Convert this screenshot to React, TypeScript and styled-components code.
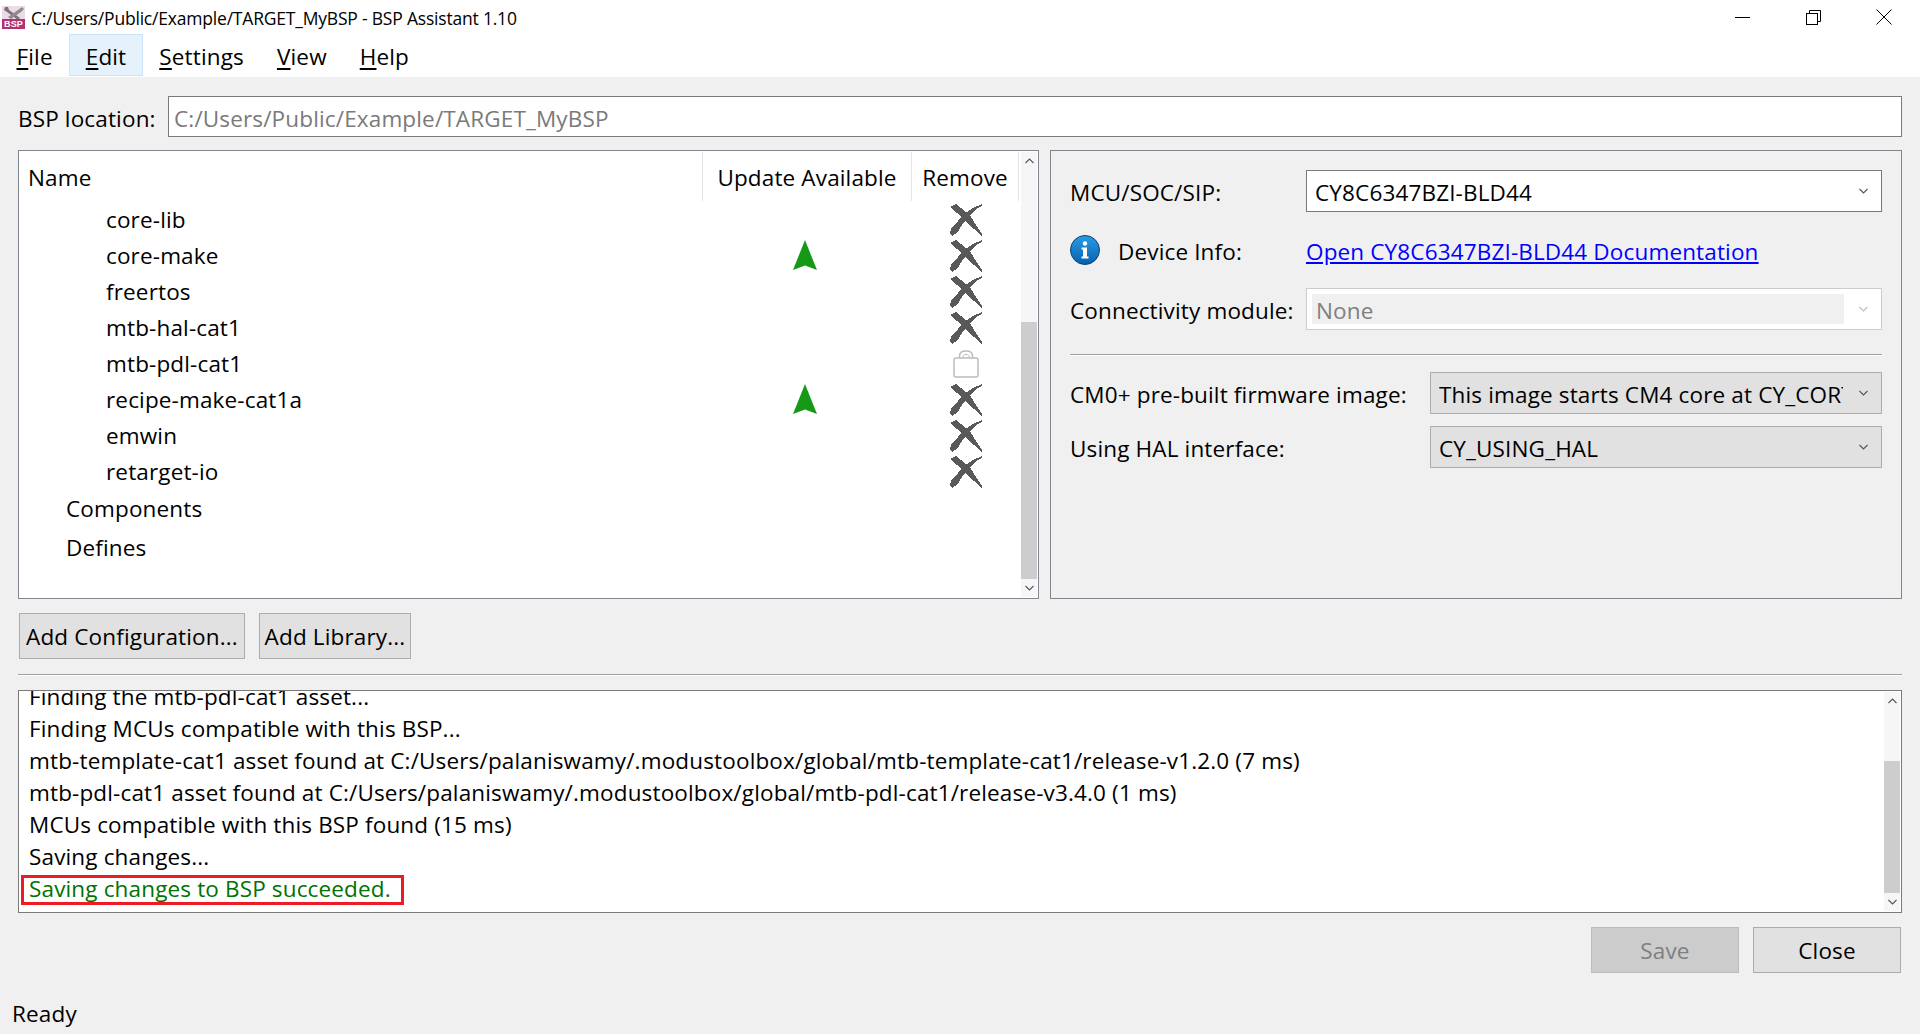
import React from 'react';
import styled, { createGlobalStyle } from 'styled-components';

const GlobalStyle = createGlobalStyle`
  html, body {
    margin: 0;
    padding: 0;
    background: #f0f0f0;
  }
  * {
    box-sizing: border-box;
  }
`;

const libraries = [
  { name: 'core-lib', update: false, locked: false },
  { name: 'core-make', update: true, locked: false },
  { name: 'freertos', update: false, locked: false },
  { name: 'mtb-hal-cat1', update: false, locked: false },
  { name: 'mtb-pdl-cat1', update: false, locked: true },
  { name: 'recipe-make-cat1a', update: true, locked: false },
  { name: 'emwin', update: false, locked: false },
  { name: 'retarget-io', update: false, locked: false },
];

const logLines = [
  'Finding the mtb-pdl-cat1 asset...',
  'Finding MCUs compatible with this BSP...',
  'mtb-template-cat1 asset found at C:/Users/palaniswamy/.modustoolbox/global/mtb-template-cat1/release-v1.2.0 (7 ms)',
  'mtb-pdl-cat1 asset found at C:/Users/palaniswamy/.modustoolbox/global/mtb-pdl-cat1/release-v3.4.0 (1 ms)',
  'MCUs compatible with this BSP found (15 ms)',
  'Saving changes...',
];

const AppIcon = () => (
  <svg width="23" height="23" viewBox="0 0 23 23">
    <rect width="23" height="23" fill="#ecdbe4" />
    <path d="M3 1 L6 1 L7 4 L18 12 L16 14 L5 6 L2 4Z" fill="#77737a" />
    <path d="M20 1 L22 3 L19 6 L9 13 L6 11 L16 4Z" fill="#8f8b91" />
    <rect y="13" width="23" height="10" fill="#b0336f" />
    <text x="11.5" y="21.4" textAnchor="middle" fontSize="9" fontWeight="700" fontFamily="Liberation Sans, sans-serif" fill="#fff">
      BSP
    </text>
  </svg>
);

const MinimizeIcon = () => (
  <svg width="15" height="15" viewBox="0 0 15 15">
    <path d="M0 7.5H15" stroke="#000" strokeWidth="1" />
  </svg>
);

const RestoreIcon = () => (
  <svg width="15" height="15" viewBox="0 0 15 15" fill="none" stroke="#000" strokeWidth="1">
    <rect x="0.5" y="3.5" width="11" height="11" />
    <path d="M3.5 3.5V0.5H14.5V11.5H11.5" />
  </svg>
);

const CloseIcon = () => (
  <svg width="16" height="16" viewBox="0 0 16 16" fill="none" stroke="#000" strokeWidth="1">
    <path d="M0.5 0.5L15.5 15.5M15.5 0.5L0.5 15.5" />
  </svg>
);

const RemoveIcon = () => (
  <svg width="32" height="32" viewBox="0 0 32 32" fill="#595959" shapeRendering="crispEdges">
    <path d="M0 3 L6 0 L16 8 L21 13 L26 21 L32 30 L32 32 L30 31 L24 25 L15 17 L7 9Z" />
    <path d="M32 0 L32 2 L26 5 L19 13 L12 21 L7 29 L2 32 L0 30 L1 24 L8 17 L14 10 L23 4Z" />
  </svg>
);

const UpdateIcon = () => (
  <svg width="24" height="30" viewBox="0 0 24 30" fill="#169a16">
    <path d="M12 0 L24 30 L12 25.5 L0 30Z" />
  </svg>
);

const LockIcon = () => (
  <svg width="26" height="28" viewBox="0 0 26 28" fill="none" stroke="#bcbcbc" strokeWidth="1.5">
    <path d="M6.5 8V6C6.5 2.5 9 1 13 1S19.5 2.5 19.5 6V8" />
    <path d="M10 8V6.5C10 5 11 4.5 13 4.5S16 5 16 6.5V8" strokeWidth="1" />
    <rect x="1" y="8" width="24" height="19" rx="2" />
  </svg>
);

const InfoIcon = () => (
  <svg width="30" height="30" viewBox="0 0 30 30">
    <defs>
      <linearGradient id="infoFill" x1="0" y1="0" x2="0" y2="1">
        <stop offset="0" stopColor="#2b9be6" />
        <stop offset="1" stopColor="#0761ad" />
      </linearGradient>
    </defs>
    <circle cx="15" cy="15" r="14.5" fill="url(#infoFill)" stroke="#0b4470" strokeWidth="1" />
    <circle cx="15" cy="8.5" r="2.2" fill="#fff" />
    <path d="M11.5 12.5H17V21.5H18.5V23.5H11.5V21.5H13V14.5H11.5Z" fill="#fff" />
  </svg>
);

const Chevron = ({ direction = 'down', color = '#555' }: { direction?: 'up' | 'down'; color?: string }) => (
  <svg width="9" height="6" viewBox="0 0 9 6" fill="none" stroke={color} strokeWidth="1.1">
    <path d={direction === 'down' ? 'M0.5 1L4.5 5L8.5 1' : 'M0.5 5L4.5 1L8.5 5'} />
  </svg>
);

const ScrollBar = ({ thumb }: { thumb: number }) => (
  <ScrollTrack>
    <ScrollArrow>
      <Chevron direction="up" />
    </ScrollArrow>
    <ScrollSpace />
    <ScrollThumb $height={thumb} />
    <ScrollArrow>
      <Chevron />
    </ScrollArrow>
  </ScrollTrack>
);

const App = () => {
  return (
    <Page>
      <GlobalStyle />
      <TitleBar>
        <TitleIcon>
          <AppIcon />
        </TitleIcon>
        <TitleText>C:/Users/Public/Example/TARGET_MyBSP - BSP Assistant 1.10</TitleText>
        <WindowButtons>
          <WindowButton>
            <MinimizeIcon />
          </WindowButton>
          <WindowButton>
            <RestoreIcon />
          </WindowButton>
          <WindowButton>
            <CloseIcon />
          </WindowButton>
        </WindowButtons>
      </TitleBar>
      <MenuBar>
        <MenuItem>
          <u>F</u>ile
        </MenuItem>
        <MenuItem $active>
          <u>E</u>dit
        </MenuItem>
        <MenuItem>
          <u>S</u>ettings
        </MenuItem>
        <MenuItem>
          <u>V</u>iew
        </MenuItem>
        <MenuItem>
          <u>H</u>elp
        </MenuItem>
      </MenuBar>
      <Content>
        <LocationRow>
          <LocationLabel>BSP location:</LocationLabel>
          <LocationField>C:/Users/Public/Example/TARGET_MyBSP</LocationField>
        </LocationRow>
        <Panels>
          <TreePanel>
            <TreeBody>
              <TreeHeader>
                <HeaderCell>Name</HeaderCell>
                <HeaderCell>Update Available</HeaderCell>
                <HeaderCell>Remove</HeaderCell>
              </TreeHeader>
              {libraries.map((lib) => (
                <TreeRow key={lib.name}>
                  <LibraryName>{lib.name}</LibraryName>
                  <UpdateCell>{lib.update && <UpdateIcon />}</UpdateCell>
                  <RemoveCell>{lib.locked ? <LockIcon /> : <RemoveIcon />}</RemoveCell>
                </TreeRow>
              ))}
              <GroupRow>Components</GroupRow>
              <GroupRow>Defines</GroupRow>
            </TreeBody>
            <ScrollBar thumb={257} />
          </TreePanel>
          <SettingsPanel>
            <FormRow $top={0} $label={236}>
              <FormLabel>MCU/SOC/SIP:</FormLabel>
              <Combo $kind="white">
                <ComboText>CY8C6347BZI-BLD44</ComboText>
                <Chevron />
              </Combo>
            </FormRow>
            <FormRow $top={17} $label={236}>
              <InfoLabel>
                <InfoIcon />
                <FormLabel>Device Info:</FormLabel>
              </InfoLabel>
              <DocLink>Open CY8C6347BZI-BLD44 Documentation</DocLink>
            </FormRow>
            <FormRow $top={17} $label={236}>
              <FormLabel>Connectivity module:</FormLabel>
              <Combo $kind="disabled">
                <DisabledField>None</DisabledField>
                <Chevron color="#bdbdbd" />
              </Combo>
            </FormRow>
            <PanelRule />
            <FormRow $top={16} $label={360}>
              <FormLabel>CM0+ pre-built firmware image:</FormLabel>
              <Combo $kind="gray">
                <ComboText>This image starts CM4 core at CY_CORTEX_M4_APPL_ADDR</ComboText>
                <Chevron />
              </Combo>
            </FormRow>
            <FormRow $top={12} $label={360}>
              <FormLabel>Using HAL interface:</FormLabel>
              <Combo $kind="gray">
                <ComboText>CY_USING_HAL</ComboText>
                <Chevron />
              </Combo>
            </FormRow>
          </SettingsPanel>
        </Panels>
        <AddButtons>
          <PushButton $width={226}>Add Configuration...</PushButton>
          <PushButton $width={152}>Add Library...</PushButton>
        </AddButtons>
        <Rule />
        <LogPanel>
          <LogBody>
            {logLines.map((line) => (
              <LogLine key={line}>{line}</LogLine>
            ))}
            <SuccessLine>Saving changes to BSP succeeded.</SuccessLine>
          </LogBody>
          <ScrollBar thumb={132} />
        </LogPanel>
        <DialogButtons>
          <PushButton $width={148} $disabled>
            Save
          </PushButton>
          <PushButton $width={148}>Close</PushButton>
        </DialogButtons>
      </Content>
      <StatusBar>Ready</StatusBar>
    </Page>
  );
};

const Page = styled.div`
  width: 1920px;
  height: 1034px;
  overflow: hidden;
  display: flex;
  flex-direction: column;
  background: #f0f0f0;
  color: #000;
  font-family: 'Open Sans', 'Noto Sans', sans-serif;
  font-size: 22.5px;
  letter-spacing: 0.15px;
`;
const TitleBar = styled.div`
  height: 34px;
  background: #fff;
  display: flex;
  align-items: center;
`;
const TitleIcon = styled.div`
  display: flex;
  margin: 0 0 0 2px;
  width: 29px;
`;
const TitleText = styled.div`
  font-size: 17.5px;
  margin-top: 2px;
  letter-spacing: -0.2px;
`;
const WindowButtons = styled.div`
  margin-left: auto;
  display: flex;
  padding-right: 28px;
  gap: 55px;
`;
const WindowButton = styled.div`
  width: 16px;
  height: 16px;
  display: flex;
  align-items: center;
  justify-content: center;
`;
const MenuBar = styled.div`
  height: 43px;
  background: #fff;
  display: flex;
`;
const MenuItem = styled.div<{ $active?: boolean }>`
  height: 42px;
  padding: 2px 15.5px 0;
  display: flex;
  align-items: center;
  border: 1px solid ${(p) => (p.$active ? '#cce4f7' : 'transparent')};
  background: ${(p) => (p.$active ? '#e5f1fb' : 'transparent')};
  white-space: pre;
  u {
    text-underline-offset: 3px;
  }
`;
const Content = styled.div`
  padding: 0 18px;
  display: flex;
  flex-direction: column;
`;
const LocationRow = styled.div`
  margin-top: 19px;
  height: 41px;
  display: flex;
  align-items: center;
`;
const LocationLabel = styled.div`
  width: 150px;
  padding: 4px 0 0;
`;
const LocationField = styled.div`
  flex: 1;
  height: 41px;
  border: 1px solid #7a7a7a;
  background: #fff;
  color: #7a7a7a;
  padding: 4px 0 0 5px;
  display: flex;
  align-items: center;
`;
const Panels = styled.div`
  margin-top: 13px;
  height: 449px;
  display: flex;
  gap: 11px;
`;
const TreePanel = styled.div`
  width: 1021px;
  border: 1px solid #82868f;
  background: #fff;
  display: flex;
`;
const TreeBody = styled.div`
  flex: 1;
  padding-left: 1px;
`;
const TreeHeader = styled.div`
  display: grid;
  grid-template-columns: 683px 209px 107px;
  height: 50px;
  padding-top: 1px;
`;
const HeaderCell = styled.div`
  display: flex;
  align-items: center;
  justify-content: center;
  padding-top: 2px;
  border-right: 1px solid #e5e5e5;
  &:first-child {
    justify-content: flex-start;
    padding-left: 8px;
  }
`;
const TreeRow = styled.div`
  display: grid;
  grid-template-columns: 683px 209px 107px;
  height: 36px;
  align-items: center;
`;
const LibraryName = styled.div`
  padding-left: 86px;
`;
const UpdateCell = styled.div`
  display: flex;
  justify-content: center;
  padding-right: 5px;
`;
const RemoveCell = styled.div`
  display: flex;
  justify-content: center;
  padding-top: 2px;
`;
const GroupRow = styled.div`
  height: 39px;
  padding-left: 46px;
  display: flex;
  align-items: center;
`;
const ScrollTrack = styled.div`
  width: 16px;
  margin: 1px;
  background: #f6f6f6;
  display: flex;
  flex-direction: column;
  flex-shrink: 0;
`;
const ScrollArrow = styled.div`
  height: 18px;
  display: flex;
  align-items: center;
  justify-content: center;
`;
const ScrollSpace = styled.div`
  flex: 1;
`;
const ScrollThumb = styled.div<{ $height: number }>`
  height: ${(p) => p.$height}px;
  background: #cdcdcd;
`;
const SettingsPanel = styled.div`
  flex: 1;
  border: 1px solid #82868f;
  padding: 19px 19px 0 19px;
`;
const FormRow = styled.div<{ $top: number; $label: number }>`
  margin-top: ${(p) => p.$top}px;
  height: 42px;
  display: grid;
  grid-template-columns: ${(p) => p.$label}px 1fr;
  align-items: center;
`;
const FormLabel = styled.div`
  white-space: nowrap;
  padding-top: 2px;
`;
const InfoLabel = styled.div`
  display: flex;
  align-items: center;
  gap: 18px;
`;
const Combo = styled.div<{ $kind: 'white' | 'disabled' | 'gray' }>`
  height: 42px;
  display: flex;
  align-items: center;
  justify-content: space-between;
  padding: 0 13px 0 ${(p) => (p.$kind === 'disabled' ? '5px' : '8px')};
  border: 1px solid ${(p) => (p.$kind === 'white' ? '#7a7a7a' : p.$kind === 'disabled' ? '#cccccc' : '#adadad')};
  background: ${(p) => (p.$kind === 'gray' ? '#e1e1e1' : '#fff')};
`;
const ComboText = styled.div`
  flex: none;
  width: 404px;
  padding-top: 2px;
  overflow: hidden;
  white-space: nowrap;
`;
const DisabledField = styled.div`
  width: 532px;
  height: 30px;
  background: #f0f0f0;
  color: #7f7f7f;
  padding: 2px 0 0 4px;
  display: flex;
  align-items: center;
`;
const DocLink = styled.div`
  color: #0000ff;
  text-decoration: underline;
  white-space: nowrap;
  padding-top: 2px;
`;
const PanelRule = styled.div`
  margin-top: 24px;
  height: 2px;
  border-top: 1px solid #a0a0a0;
  border-bottom: 1px solid #fff;
`;
const AddButtons = styled.div`
  margin-top: 14px;
  padding-left: 1px;
  display: flex;
  gap: 14px;
`;
const PushButton = styled.div<{ $width: number; $disabled?: boolean }>`
  width: ${(p) => p.$width}px;
  height: 46px;
  display: flex;
  align-items: center;
  justify-content: center;
  border: 1px solid ${(p) => (p.$disabled ? '#bcbcbc' : '#adadad')};
  background: ${(p) => (p.$disabled ? '#cccccc' : '#e1e1e1')};
  color: ${(p) => (p.$disabled ? '#7f7f7f' : '#000')};
`;
const Rule = styled.div`
  margin-top: 15px;
  height: 2px;
  border-top: 1px solid #a0a0a0;
  border-bottom: 1px solid #fff;
`;
const LogPanel = styled.div`
  margin-top: 14px;
  height: 223px;
  border: 1px solid #7a7a7a;
  background: #fff;
  display: flex;
`;
const LogBody = styled.div`
  flex: 1;
  overflow: hidden;
  display: flex;
  flex-direction: column;
  justify-content: flex-end;
  padding: 0 0 7px 2px;
`;
const LogLine = styled.div`
  height: 32px;
  flex-shrink: 0;
  padding-left: 8px;
  display: flex;
  align-items: center;
  white-space: nowrap;
`;
const SuccessLine = styled.div`
  height: 30px;
  flex-shrink: 0;
  margin-top: 3px;
  width: 383px;
  padding: 0 0 3px 5px;
  border: 3px solid #ed1c24;
  color: #007300;
  display: flex;
  align-items: center;
  white-space: nowrap;
`;
const DialogButtons = styled.div`
  margin-top: 14px;
  padding-right: 1px;
  display: flex;
  justify-content: flex-end;
  gap: 14px;
`;
const StatusBar = styled.div`
  margin-top: 25px;
  padding-left: 12px;
`;

export default App;
